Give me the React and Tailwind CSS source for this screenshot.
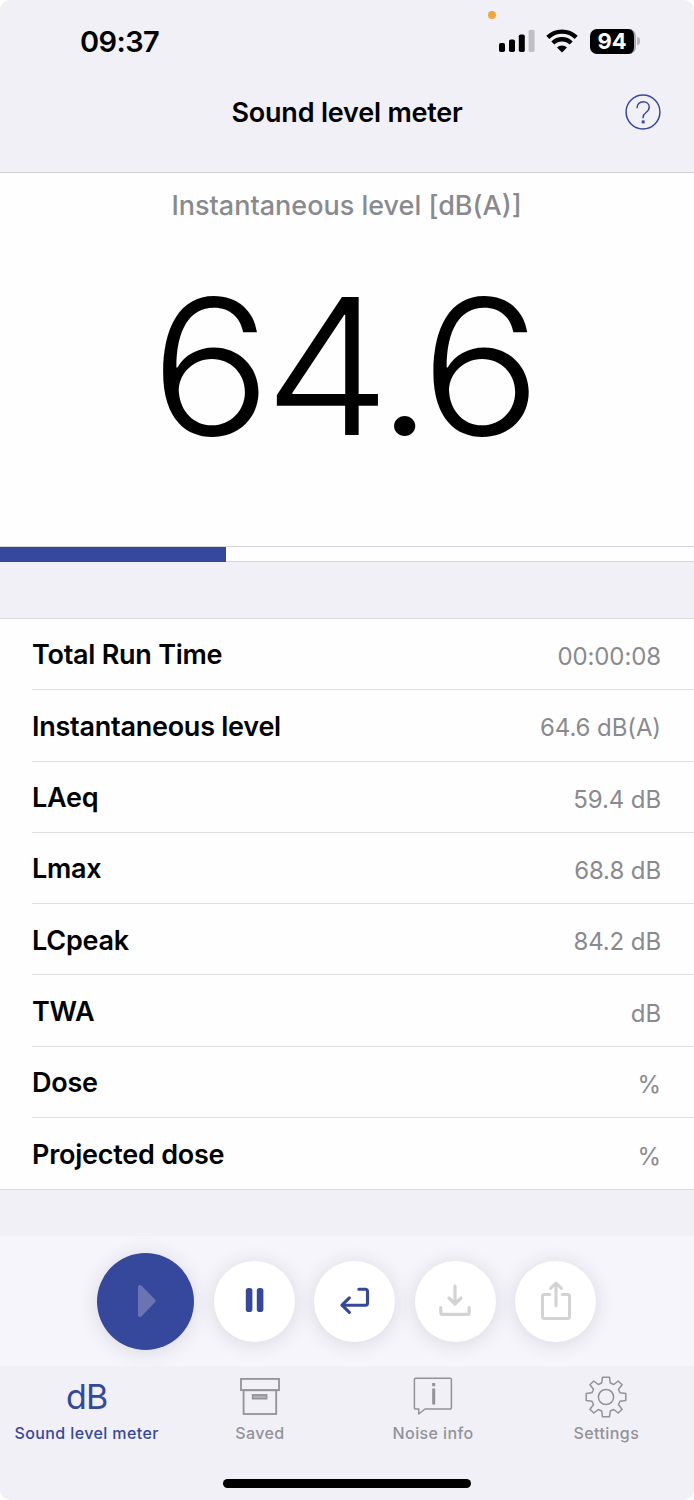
import React, { useState } from 'react';

const ROWS = [
    { label: 'Total Run Time', value: '00:00:08' },
    { label: 'Instantaneous level', value: '64.6 dB(A)' },
    { label: 'LAeq', value: '59.4 dB' },
    { label: 'Lmax', value: '68.8 dB' },
    { label: 'LCpeak', value: '84.2 dB' },
    { label: 'TWA', value: 'dB' },
    { label: 'Dose', value: '%' },
    { label: 'Projected dose', value: '%' }
];

const SignalIcon = () => (
    <svg width="36" height="24" viewBox="0 0 36 24">
        <rect x="0" y="14" width="6" height="9" rx="1.8" fill="#000" />
        <rect x="10" y="10.5" width="6" height="12.5" rx="1.8" fill="#000" />
        <rect x="19.8" y="5.5" width="6" height="17.5" rx="1.8" fill="#000" />
        <rect x="29.6" y="0.8" width="6" height="22.2" rx="1.8" fill="#c0bfc6" />
    </svg>
);

const WifiIcon = () => (
    <svg width="32" height="24" viewBox="0 0 32 24" fill="none" stroke="#000" strokeWidth="4.3">
        <path d="M1.8 8.4a20.2 20.2 0 0 1 28.4 0" />
        <path d="M6.8 14a13.2 13.2 0 0 1 18.4 0" />
        <path d="M16 23.4l-5-4.9a7 7 0 0 1 10 0z" fill="#000" stroke="none" />
    </svg>
);

const HelpIcon = () => (
    <svg width="36" height="36" viewBox="0 0 36 36" fill="none" stroke="#36489b" strokeWidth="1.5">
        <circle cx="18" cy="18" r="16.9" />
        <path d="M12 14.3c0-4 2.4-6.6 6.2-6.6 3.6 0 6 2.2 6 5.4 0 2.5-1.2 4-3.2 5.4-2.3 1.6-2.9 2.6-2.9 4.9v.8" />
        <rect x="16.7" y="26.4" width="2.9" height="3" fill="#36489b" stroke="none" />
    </svg>
);

const PlayIcon = () => (
    <svg width="20" height="34" viewBox="0 0 20 34" fill="#6a74b3">
        <path d="M1 3.2C1 1 3 .2 4.6 1.8l13.2 13.4c1.1 1.1 1.1 2.3 0 3.4L4.6 32.2C3 33.8 1 33 1 30.8z" />
    </svg>
);

const PauseIcon = () => (
    <svg width="19" height="24" viewBox="0 0 19 24" fill="#36489b">
        <rect x="0.8" y="0" width="6.6" height="24" rx="2.8" />
        <rect x="11.8" y="0" width="6.6" height="24" rx="2.8" />
    </svg>
);

const ReturnIcon = () => (
    <svg width="30" height="27" viewBox="0 0 30 27" fill="none" stroke="#36489b" strokeWidth="3.1" strokeLinecap="round" strokeLinejoin="round">
        <path d="M18.8 2.2h6.7a2 2 0 0 1 2 2v12a2 2 0 0 1-2 2H2.4" />
        <path d="M9.3 10.8l-7.3 7.4 7.3 7.1" />
    </svg>
);

const DownloadIcon = () => (
    <svg width="32" height="33" viewBox="0 0 32 33" fill="none" stroke="#d3d3d5" strokeWidth="3.2" strokeLinecap="round" strokeLinejoin="round">
        <path d="M16 2v17.8M10 14l6 6 6-6" />
        <path d="M1.8 23.7v4.7a2 2 0 0 0 2 2h24.4a2 2 0 0 0 2-2v-4.7" />
    </svg>
);

const ShareIcon = () => (
    <svg width="30" height="39" viewBox="0 0 30 39" fill="none" stroke="#d3d3d5" strokeWidth="3" strokeLinecap="round" strokeLinejoin="round">
        <path d="M15 25V2.5M9.7 7.3L15 2l5.3 5.3" />
        <path d="M8.800 13.400H3.500a2 2 0 0 0-2 2v20a2 2 0 0 0 2 2h23a2 2 0 0 0 2-2v-20a2 2 0 0 0-2-2h-5.300" />
    </svg>
);

const ArchiveIcon = () => (
    <svg width="42" height="42" viewBox="0 0 42 42" fill="none" stroke="#929297" strokeWidth="1.8">
        <rect x="2" y="2.9" width="38" height="11.3" />
        <rect x="4.6" y="14.2" width="32.6" height="23.8" />
        <rect x="13.6" y="18.9" width="14" height="3.8" fill="#b1b1b6" strokeWidth="1.6" />
    </svg>
);

const InfoIcon = () => (
    <svg width="42" height="42" viewBox="0 0 42 42" fill="none" stroke="#929297" strokeWidth="1.5" strokeLinejoin="round">
        <path d="M3.6 2.2h34.6a1.2 1.2 0 0 1 1.2 1.2v28.4a1.2 1.2 0 0 1-1.2 1.2H13l-6.3 5V33H3.600a1.200 1.200 0 0 1-1.200-1.200V3.400a1.200 1.200 0 0 1 1.200-1.200z" />
        <path d="M21.7 12.500v16M21.7 6.900v3.300" strokeWidth="3" />
    </svg>
);

const GearIcon = () => (
    <svg width="42" height="42" viewBox="-21 -21 42 42" fill="none" stroke="#929297" strokeWidth="1.5" strokeLinejoin="round">
        <circle r="7.6" />
        <path d="M-3.5-19.8H3.5L4.3-14 7.7-12.5 12.2-16 16.1-12.2 12.5-7.7 14-4.3 19.8-3.5V3.5L14 4.3 12.5 7.7 16.1 12.2 12.2 16 7.7 12.5 4.3 14 3.5 19.8H-3.5L-4.3 14-7.7 12.5-12.2 16-16.1 12.2-12.5 7.7-14 4.3-19.8 3.5V-3.5L-14-4.3-12.5-7.7-16.1-12.2-12.2-16-7.7-12.5-4.3-14z" />
    </svg>
);

const TABS = [
    { id: 'meter', label: 'Sound level meter', icon: <span className="text-[34px] leading-[42px] tracking-[-0.8px]">dB</span> },
    { id: 'saved', label: 'Saved', icon: <ArchiveIcon /> },
    { id: 'info', label: 'Noise info', icon: <InfoIcon /> },
    { id: 'settings', label: 'Settings', icon: <GearIcon /> }
];

function StatusBar() {
    return (
        <div className="relative flex h-[82px] items-center justify-between pl-[80px] pr-[54px]">
            <span className="text-[29px] font-semibold leading-none tracking-[-0.6px]">09:37</span>
            <span className="absolute left-[488px] top-[11px] size-2 rounded-full bg-[#f2a33a]"></span>
            <div className="flex items-center">
                <SignalIcon />
                <div className="ml-[11px]"><WifiIcon /></div>
                <div className="ml-[12px] flex h-[25px] w-[46px] items-center justify-center rounded-[7px] border-r-2 border-[#aaa9b0] bg-black text-[22px] font-bold leading-none text-white">94</div>
                <div className="ml-px h-2 w-[3px] rounded-r-full bg-[#b9b8bf]"></div>
            </div>
        </div>
    );
}

function RoundButton({ children }) {
    return (
        <button className="flex size-[81px] items-center justify-center rounded-full bg-white pb-[2px] shadow-[0_2px_20px_rgba(40,40,70,0.14)]">
            {children}
        </button>
    );
}

export default function App() {
    const [activeTab, setActiveTab] = useState('meter');
    const progress = 226 / 694;

    return (
        <div className="h-[1500px] w-[694px] overflow-hidden bg-white font-['Inter','Liberation_Sans',sans-serif] text-black">
            <div className="flex h-full flex-col overflow-hidden rounded-[10px] bg-[#f1f0f7]">
                <header className="h-[173px] shrink-0 border-b border-[#d0cfd6]">
                    <StatusBar />
                    <div className="grid h-[60px] grid-cols-[1fr_auto_1fr] items-center px-[33px]">
                        <h1 className="col-start-2 pt-[2px] text-[27px] font-semibold tracking-[-0.2px]">Sound level meter</h1>
                        <button className="justify-self-end"><HelpIcon /></button>
                    </div>
                </header>

                {/* Current reading */}
                <section className="flex h-[373px] shrink-0 flex-col items-center bg-[#fefefe]">
                    <h2 className="mt-[13px] pr-px text-[27px] font-medium leading-[40px] text-[#8a8a8e]">Instantaneous level [dB(A)]</h2>
                    <div className="mt-[41px] mr-[10px] scale-x-[1.065] text-[189px] font-light leading-[200px] tracking-[-7px]">64.6</div>
                </section>
                <div className="h-4 shrink-0 border-y border-[#d6d5db] bg-[#fefefe]">
                    <div className="h-[15px] bg-[#36489b]" style={{ width: `${progress * 100}%` }}></div>
                </div>

                <ul className="mt-[56px] shrink-0 border-y border-[#dddce1] bg-[#fefefe]">
                    {ROWS.map((row, i) => (
                        <li key={row.label} className={`ml-[32px] flex h-[71.3px] items-center justify-between pr-[33px] pt-[3px] ${i < ROWS.length - 1 ? 'border-b border-[#dfdfe2]' : ''}`}>
                            <span className="text-[27px] font-semibold tracking-[-0.25px]">{row.label}</span>
                            <span className="mt-[3px] text-[24px] tracking-[-0.1px] text-[#8a8a8e]">{row.value}</span>
                        </li>
                    ))}
                </ul>

                {/* Recording controls */}
                <div className="mt-[46px] flex h-[130px] shrink-0 items-center justify-center gap-[19.5px] bg-[#f6f5fb] pr-px">
                    <button className="flex size-[97px] items-center justify-center rounded-full bg-[#36489b] pl-[3px] shadow-[0_2px_20px_rgba(40,40,70,0.14)]">
                        <PlayIcon />
                    </button>
                    <RoundButton><PauseIcon /></RoundButton>
                    <RoundButton><ReturnIcon /></RoundButton>
                    <RoundButton><DownloadIcon /></RoundButton>
                    <RoundButton><ShareIcon /></RoundButton>
                </div>

                <nav className="grid shrink-0 grid-cols-4 pr-px pt-[10px]">
                    {TABS.map(tab => (
                        <button
                            key={tab.id}
                            onClick={() => setActiveTab(tab.id)}
                            className={`flex flex-col items-center ${activeTab === tab.id ? 'text-[#36489b]' : 'text-[#929297]'}`}
                        >
                            {tab.icon}
                            <span className="mt-[5px] whitespace-nowrap text-[16px] font-medium leading-[20px] tracking-[0.4px]">{tab.label}</span>
                        </button>
                    ))}
                </nav>
                <div className="mx-auto mt-auto mb-[12px] h-[9px] w-[248px] shrink-0 rounded-full bg-black"></div>
            </div>
        </div>
    );
}
